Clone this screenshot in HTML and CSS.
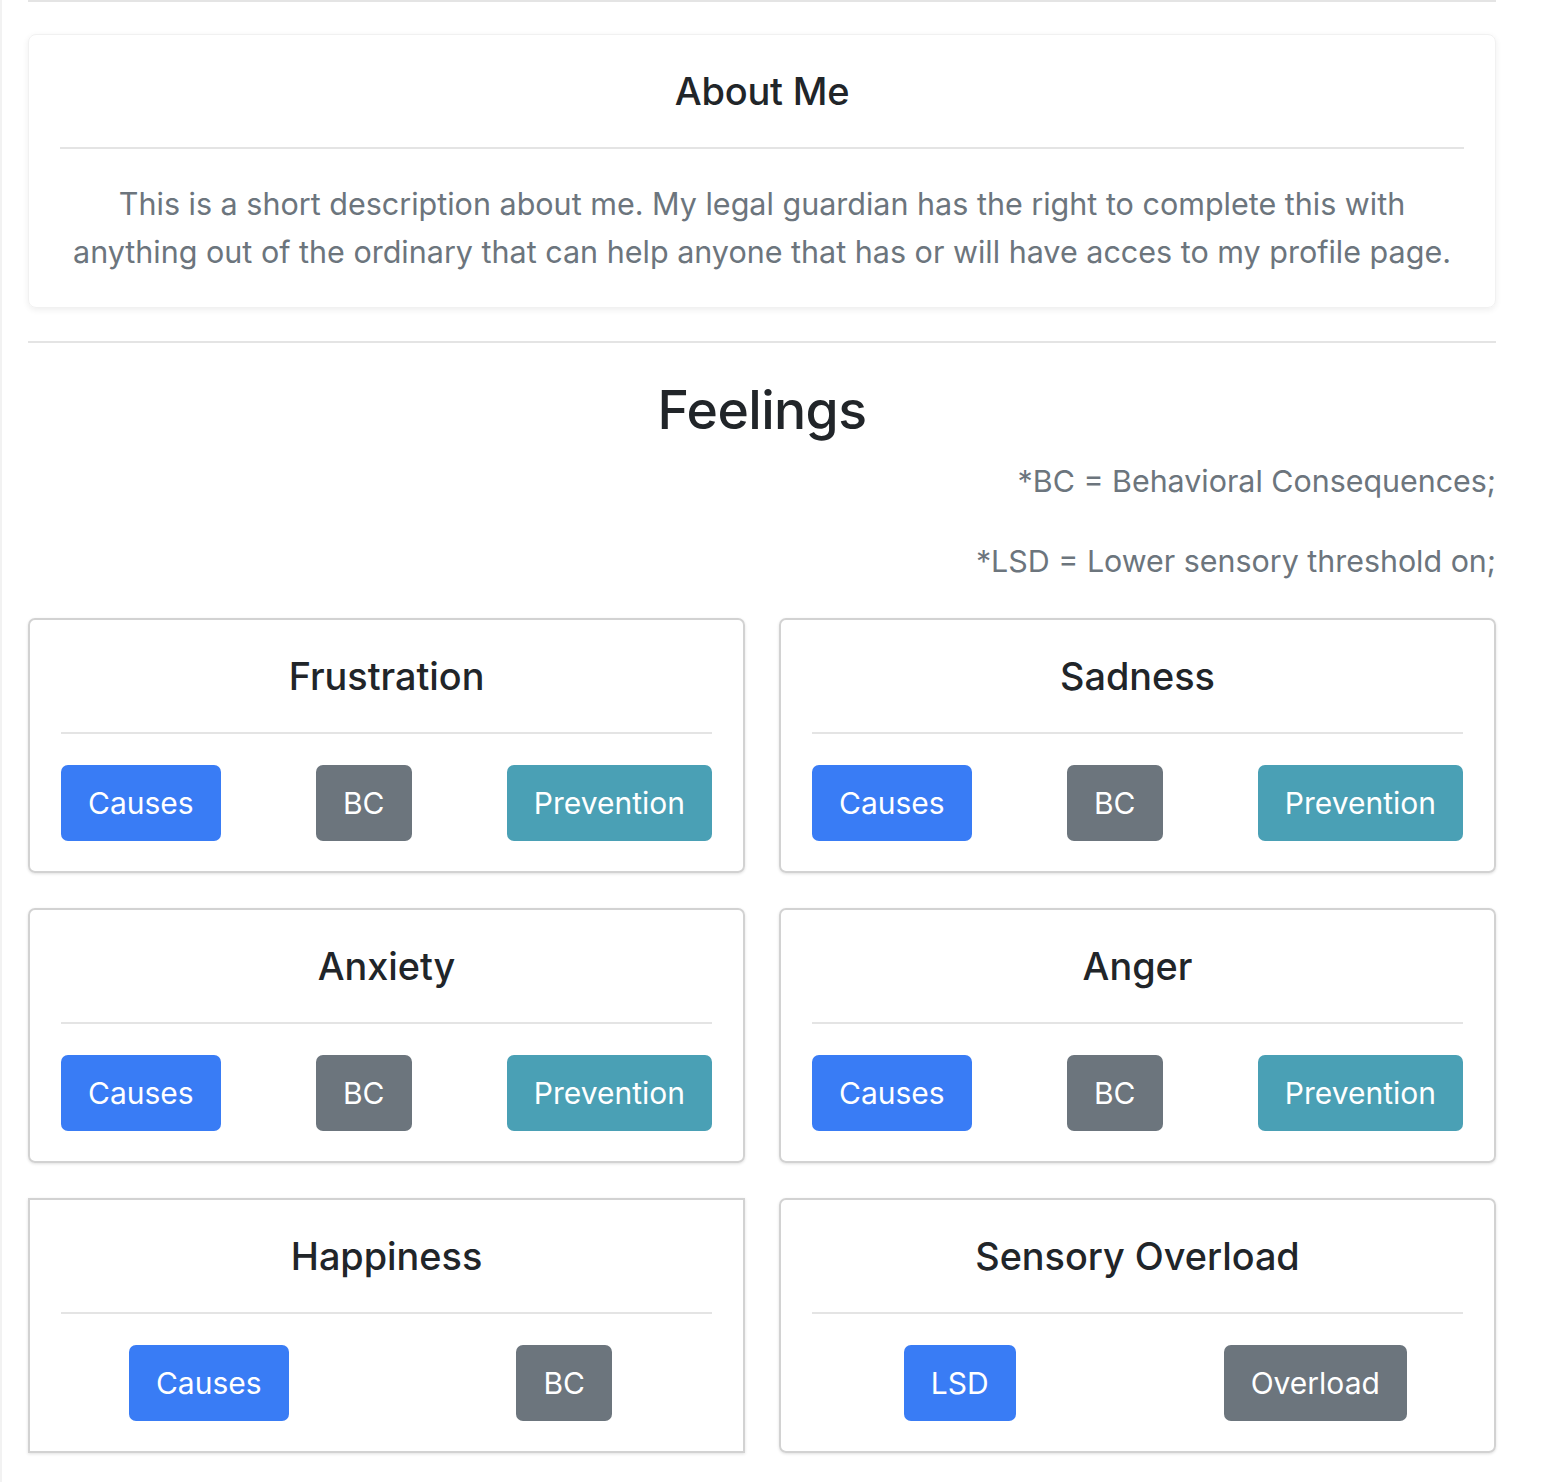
FILE: index.html
```html
<!DOCTYPE html>
<html lang="en">
<head>
<meta charset="utf-8">
<title>Profile</title>
<link rel="stylesheet" href="styles.css">
</head>
<body>
<div class="page">
  <div class="container">
    <div class="rule rule-top"></div>
    <section class="about">
      <h2 class="about-title">About Me</h2>
      <div class="rule"></div>
      <p class="about-text">This is a short description about me. My legal guardian has the right to complete this with anything out of the ordinary that can help anyone that has or will have acces to my profile page.</p>
    </section>
    <div class="rule rule-section"></div>
    <h1 class="feelings-title">Feelings</h1>
    <p class="note note-first">*BC = Behavioral Consequences;</p>
    <p class="note note-second">*LSD = Lower sensory threshold on;</p>
    <div class="feelings-grid">
      <div class="feel-card">
        <h3 class="feel-title">Frustration</h3>
        <div class="rule"></div>
        <div class="btn-row">
          <button class="btn btn-primary">Causes</button>
          <button class="btn btn-secondary">BC</button>
          <button class="btn btn-info">Prevention</button>
        </div>
      </div>
      <div class="feel-card">
        <h3 class="feel-title">Sadness</h3>
        <div class="rule"></div>
        <div class="btn-row">
          <button class="btn btn-primary">Causes</button>
          <button class="btn btn-secondary">BC</button>
          <button class="btn btn-info">Prevention</button>
        </div>
      </div>
      <div class="feel-card">
        <h3 class="feel-title">Anxiety</h3>
        <div class="rule"></div>
        <div class="btn-row">
          <button class="btn btn-primary">Causes</button>
          <button class="btn btn-secondary">BC</button>
          <button class="btn btn-info">Prevention</button>
        </div>
      </div>
      <div class="feel-card">
        <h3 class="feel-title">Anger</h3>
        <div class="rule"></div>
        <div class="btn-row">
          <button class="btn btn-primary">Causes</button>
          <button class="btn btn-secondary">BC</button>
          <button class="btn btn-info">Prevention</button>
        </div>
      </div>
      <div class="feel-card feel-card-square">
        <h3 class="feel-title">Happiness</h3>
        <div class="rule"></div>
        <div class="btn-cols">
          <button class="btn btn-primary">Causes</button>
          <button class="btn btn-secondary">BC</button>
        </div>
      </div>
      <div class="feel-card">
        <h3 class="feel-title">Sensory Overload</h3>
        <div class="rule"></div>
        <div class="btn-cols">
          <button class="btn btn-primary">LSD</button>
          <button class="btn btn-secondary">Overload</button>
        </div>
      </div>
    </div>
  </div>
</div>
</body>
</html>
```
FILE: styles.css
```css
* { box-sizing: border-box; }

html, body {
  margin: 0;
  padding: 0;
  background: #ffffff;
}

body {
  font-family: Inter, "Noto Sans", "Liberation Sans", sans-serif;
  color: #212529;
}

.page {
  min-height: 1482px;
  border-left: 2px solid #f2f2f2;
}

.container {
  width: 1468px;
  margin-left: 26px;
  padding-bottom: 28px;
}

.rule {
  height: 2px;
  background: #e4e4e4;
}

.rule-top {
  margin-top: 0;
}

.about {
  margin-top: 32px;
  border: 1px solid #f1f1f1;
  border-radius: 8px;
  box-shadow: 0 2px 6px rgba(0, 0, 0, 0.07);
  padding: 32px 31px 31px;
}

.about-title {
  margin: 0 0 32px;
  font-size: 38px;
  line-height: 48px;
  font-weight: 500;
  text-align: center;
  letter-spacing: -0.2px;
}

.about-text {
  margin: 31px 0 0;
  font-size: 30.5px;
  line-height: 48px;
  color: #6c757d;
  text-align: center;
}

.rule-section {
  margin-top: 33px;
}

.feelings-title {
  margin: 34px 0 0;
  font-size: 53.5px;
  line-height: 66px;
  font-weight: 500;
  text-align: center;
  letter-spacing: -0.6px;
}

.note {
  margin: 0;
  font-size: 30.4px;
  line-height: 45px;
  color: #6c757d;
  text-align: right;
}

.note-first { margin-top: 16px; }
.note-second { margin-top: 35px; }

.feelings-grid {
  margin-top: 34px;
  display: grid;
  grid-template-columns: 717px 717px;
  column-gap: 34px;
  row-gap: 35px;
}

.feel-card {
  border: 2px solid #d2d2d2;
  border-radius: 7px;
  box-shadow: 0 1px 3px rgba(0, 0, 0, 0.12);
  padding: 34px 31px 30px;
}

.feel-card-square {
  border-radius: 0;
}

.feel-title {
  margin: 0 0 34px;
  font-size: 37.8px;
  line-height: 44px;
  font-weight: 500;
  text-align: center;
}

.btn-row {
  margin-top: 31px;
  display: flex;
  justify-content: space-between;
}

.btn-cols {
  margin: 31px -30px 0;
  display: grid;
  grid-template-columns: 1fr 1fr;
  justify-items: center;
}

.btn {
  height: 76px;
  padding: 0 27px;
  border: none;
  border-radius: 7px;
  font-family: inherit;
  font-size: 30px;
  line-height: 76px;
  color: #ffffff;
  cursor: pointer;
}

.btn-primary { background: #397cf5; }
.btn-secondary { background: #6c757d; }
.btn-info { background: #4aa0b5; }
```
